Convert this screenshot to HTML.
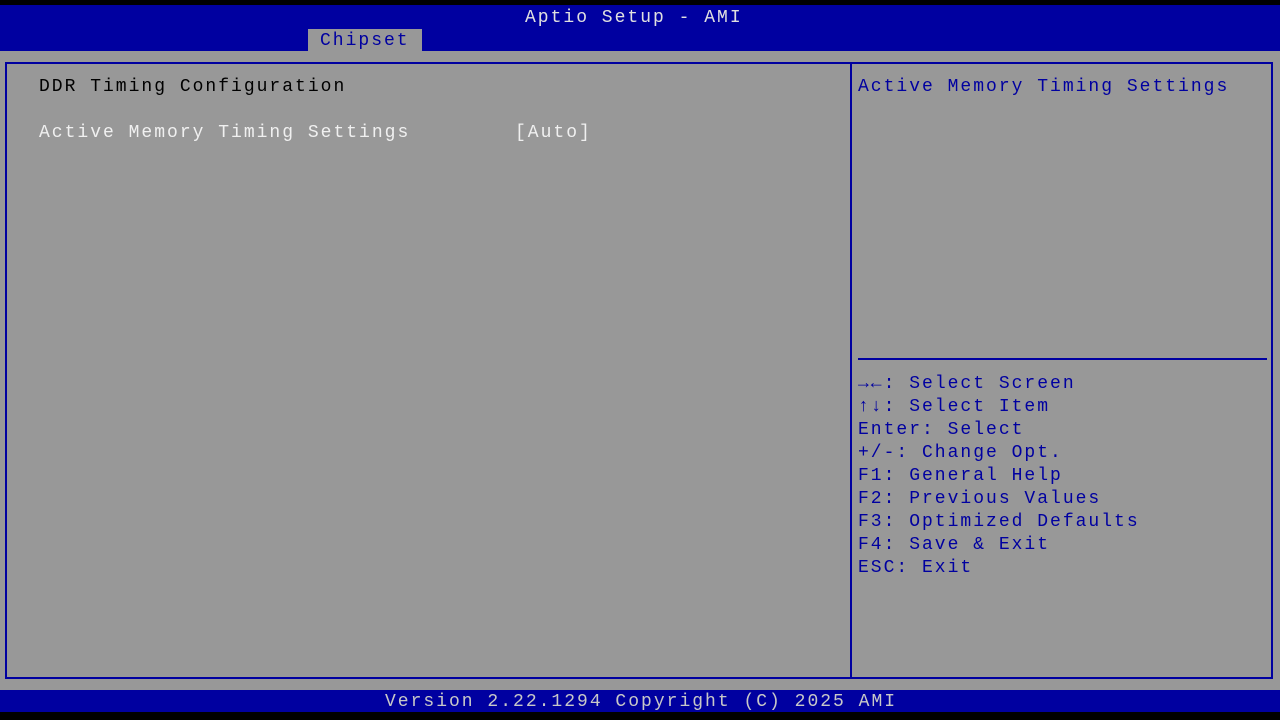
<!DOCTYPE html>
<html><head><meta charset="utf-8"><style>
body{margin:0;width:1280px;height:720px;background:#000;position:relative;overflow:hidden;font-family:"Liberation Mono",monospace;font-size:18px;letter-spacing:2px}
div{position:absolute;white-space:pre;line-height:23px}
b{font-weight:bold}
</style></head><body>
<div style="left:0;top:5px;width:1280px;height:46px;background:#0000a0"></div>
<div style="left:0;top:51px;width:1280px;height:639px;background:#989898"></div>
<div style="left:0;top:690px;width:1280px;height:22px;background:#0000a0"></div>
<div style="left:525px;top:7px;color:#e0e0e0">Aptio Setup - AMI</div>
<div style="left:308px;top:29px;width:114px;height:22px;background:#989898"></div>
<div style="left:320px;top:30px;color:#0000a0">Chipset</div>
<div style="left:5px;top:62px;width:1264px;height:613px;border:2px solid #0000a0"></div>
<div style="left:850px;top:64px;width:2px;height:613px;background:#0000a0"></div>
<div style="left:858px;top:358px;width:409px;height:2px;background:#0000a0"></div>
<div style="left:39px;top:76px;color:#000">DDR Timing Configuration</div>
<div style="left:39px;top:122px;color:#f0f0f0">Active Memory Timing Settings</div>
<div style="left:515px;top:122px;color:#f0f0f0">[Auto]</div>
<div style="left:858px;top:76px;color:#0000a0">Active Memory Timing Settings</div>
<div style="left:858px;top:373px;color:#0000a0"><b>→←</b>: Select Screen
<b>↑↓</b>: Select Item
Enter: Select
+/-: Change Opt.
F1: General Help
F2: Previous Values
F3: Optimized Defaults
F4: Save &amp; Exit
ESC: Exit</div>
<div style="left:385px;top:691px;color:#c8c8c8">Version 2.22.1294 Copyright (C) 2025 AMI</div>
</body></html>
